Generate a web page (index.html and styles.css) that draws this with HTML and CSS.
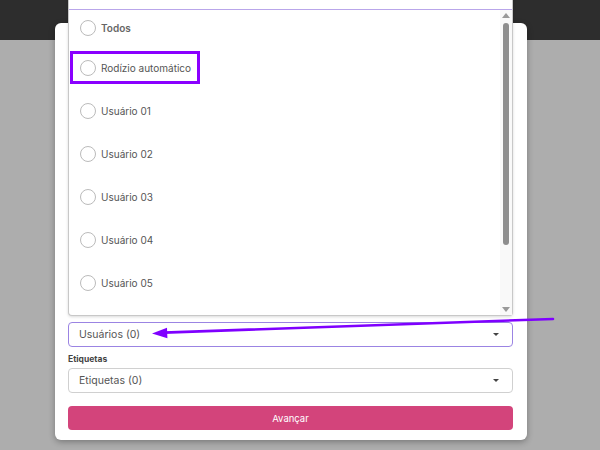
FILE: index.html
```html
<!DOCTYPE html>
<html lang="pt-BR">
<head>
    <meta charset="UTF-8">
    <meta name="viewport" content="width=device-width, initial-scale=1.0">
    <title>Distribuição</title>
    <link rel="stylesheet" href="styles.css">
</head>
<body>
    <div class="modal">
        <div class="field users-field">
            <div class="dropdown">
                <div class="dropdown-search"></div>
                <div class="dropdown-body">
                    <div class="option-list">
                        <div class="option option-all">
                            <span class="option-label"><span class="radio"></span>Todos</span>
                        </div>
                        <div class="option">
                            <span class="option-label highlight"><span class="radio"></span>Rodízio automático</span>
                        </div>
                        <div class="option">
                            <span class="option-label"><span class="radio"></span>Usuário 01</span>
                        </div>
                        <div class="option">
                            <span class="option-label"><span class="radio"></span>Usuário 02</span>
                        </div>
                        <div class="option">
                            <span class="option-label"><span class="radio"></span>Usuário 03</span>
                        </div>
                        <div class="option">
                            <span class="option-label"><span class="radio"></span>Usuário 04</span>
                        </div>
                        <div class="option">
                            <span class="option-label"><span class="radio"></span>Usuário 05</span>
                        </div>
                    </div>
                    <div class="scrollbar">
                        <span class="scroll-up"></span>
                        <span class="scroll-thumb"></span>
                        <span class="scroll-down"></span>
                    </div>
                </div>
            </div>
            <div class="select active">
                <span>Usuários (0)</span>
                <span class="caret"></span>
            </div>
        </div>

        <div class="field">
            <label class="field-label">Etiquetas</label>
            <div class="select">
                <span>Etiquetas (0)</span>
                <span class="caret"></span>
            </div>
        </div>

        <button class="btn-next">Avançar</button>
    </div>

    <!-- annotation arrow -->
    <svg class="annotation" width="600" height="450" viewBox="0 0 600 450">
        <line x1="553" y1="319" x2="164" y2="332.6" stroke="#7f00ff" stroke-width="2.6" stroke-linecap="round"/>
        <polygon points="152,333.6 167,327.8 167.4,338.2" fill="#7f00ff"/>
    </svg>
</body>
</html>
```

FILE: styles.css
```css
* {
    box-sizing: border-box;
    margin: 0;
    padding: 0;
}

body {
    width: 600px;
    height: 450px;
    overflow: hidden;
    background: linear-gradient(#2d2d2d 0, #2d2d2d 40px, #adadad 40px);
    font-family: 'Inter', 'Liberation Sans', sans-serif;
    position: relative;
}

.modal {
    width: 472px;
    height: 417px;
    margin: 23px 0 0 55px;
    padding: 0 14px 10px 13px;
    background: white;
    border-radius: 6px;
    box-shadow: 0 2px 6px rgba(0,0,0,0.3);
    display: flex;
    flex-direction: column;
    justify-content: flex-end;
}

.field {
    position: relative;
}

.field-label {
    display: block;
    font-size: 8.5px;
    font-weight: 700;
    line-height: 12px;
    color: #444;
    margin: 6px 0 3px;
}

.select {
    height: 25px;
    border: 1px solid #d0d0d0;
    border-radius: 4px;
    padding: 0 13px 0 10px;
    display: flex;
    align-items: center;
    justify-content: space-between;
    font-size: 10.5px;
    color: #555;
}

.select.active {
    border-color: #9b84e3;
}

.caret {
    width: 0;
    height: 0;
    border-left: 3px solid transparent;
    border-right: 3px solid transparent;
    border-top: 3.5px solid #444;
}

.btn-next {
    width: 100%;
    height: 24px;
    margin-top: 13px;
    border: none;
    border-radius: 4px;
    background: #d3447b;
    color: white;
    font-family: inherit;
    font-size: 9.5px;
}

/* open dropdown */
.dropdown {
    position: absolute;
    left: 0;
    right: 0;
    bottom: calc(100% + 6px);
    height: 332px;
    background: white;
    border: 1px solid #c8c8c8;
    border-top: none;
    border-radius: 0 0 4px 4px;
    box-shadow: 0 1px 3px rgba(0,0,0,0.15);
    display: flex;
    flex-direction: column;
    z-index: 2;
}

.dropdown-search {
    height: 26px;
    flex: none;
    border-bottom: 1px solid #b9a6ea;
}

.dropdown-body {
    flex: 1;
    min-height: 0;
    display: flex;
}

.option-list {
    flex: 1;
    overflow: hidden;
}

.option {
    height: 43px;
    display: flex;
    align-items: center;
    padding-left: 1px;
    font-size: 10px;
    color: #555;
    white-space: nowrap;
}

.option-all {
    height: 36px;
    font-weight: 600;
    color: #666;
}

.option-label {
    display: inline-flex;
    align-items: center;
    gap: 5px;
    height: 33px;
    padding: 0 14px 0 7px;
    border: 3px solid transparent;
}

.option-label.highlight {
    border-color: #8a00ff;
    width: 130px;
    padding-right: 0;
}

.radio {
    width: 16px;
    height: 16px;
    border: 1px solid #bbb;
    border-radius: 50%;
    flex: none;
}

.scrollbar {
    width: 12px;
    flex: none;
    display: flex;
    flex-direction: column;
    align-items: center;
    background: #f9f9f9;
    padding: 3px 0 3px;
}

.scroll-up,
.scroll-down {
    width: 0;
    height: 0;
    border-left: 4px solid transparent;
    border-right: 4px solid transparent;
}

.scroll-up {
    border-bottom: 5px solid #999;
}

.scroll-down {
    border-top: 5px solid #999;
    margin-top: auto;
}

.scroll-thumb {
    width: 6px;
    height: 222px;
    margin-top: 5px;
    border-radius: 3px;
    background: #8e8e8e;
}

.annotation {
    position: absolute;
    top: 0;
    left: 0;
    pointer-events: none;
}
```
